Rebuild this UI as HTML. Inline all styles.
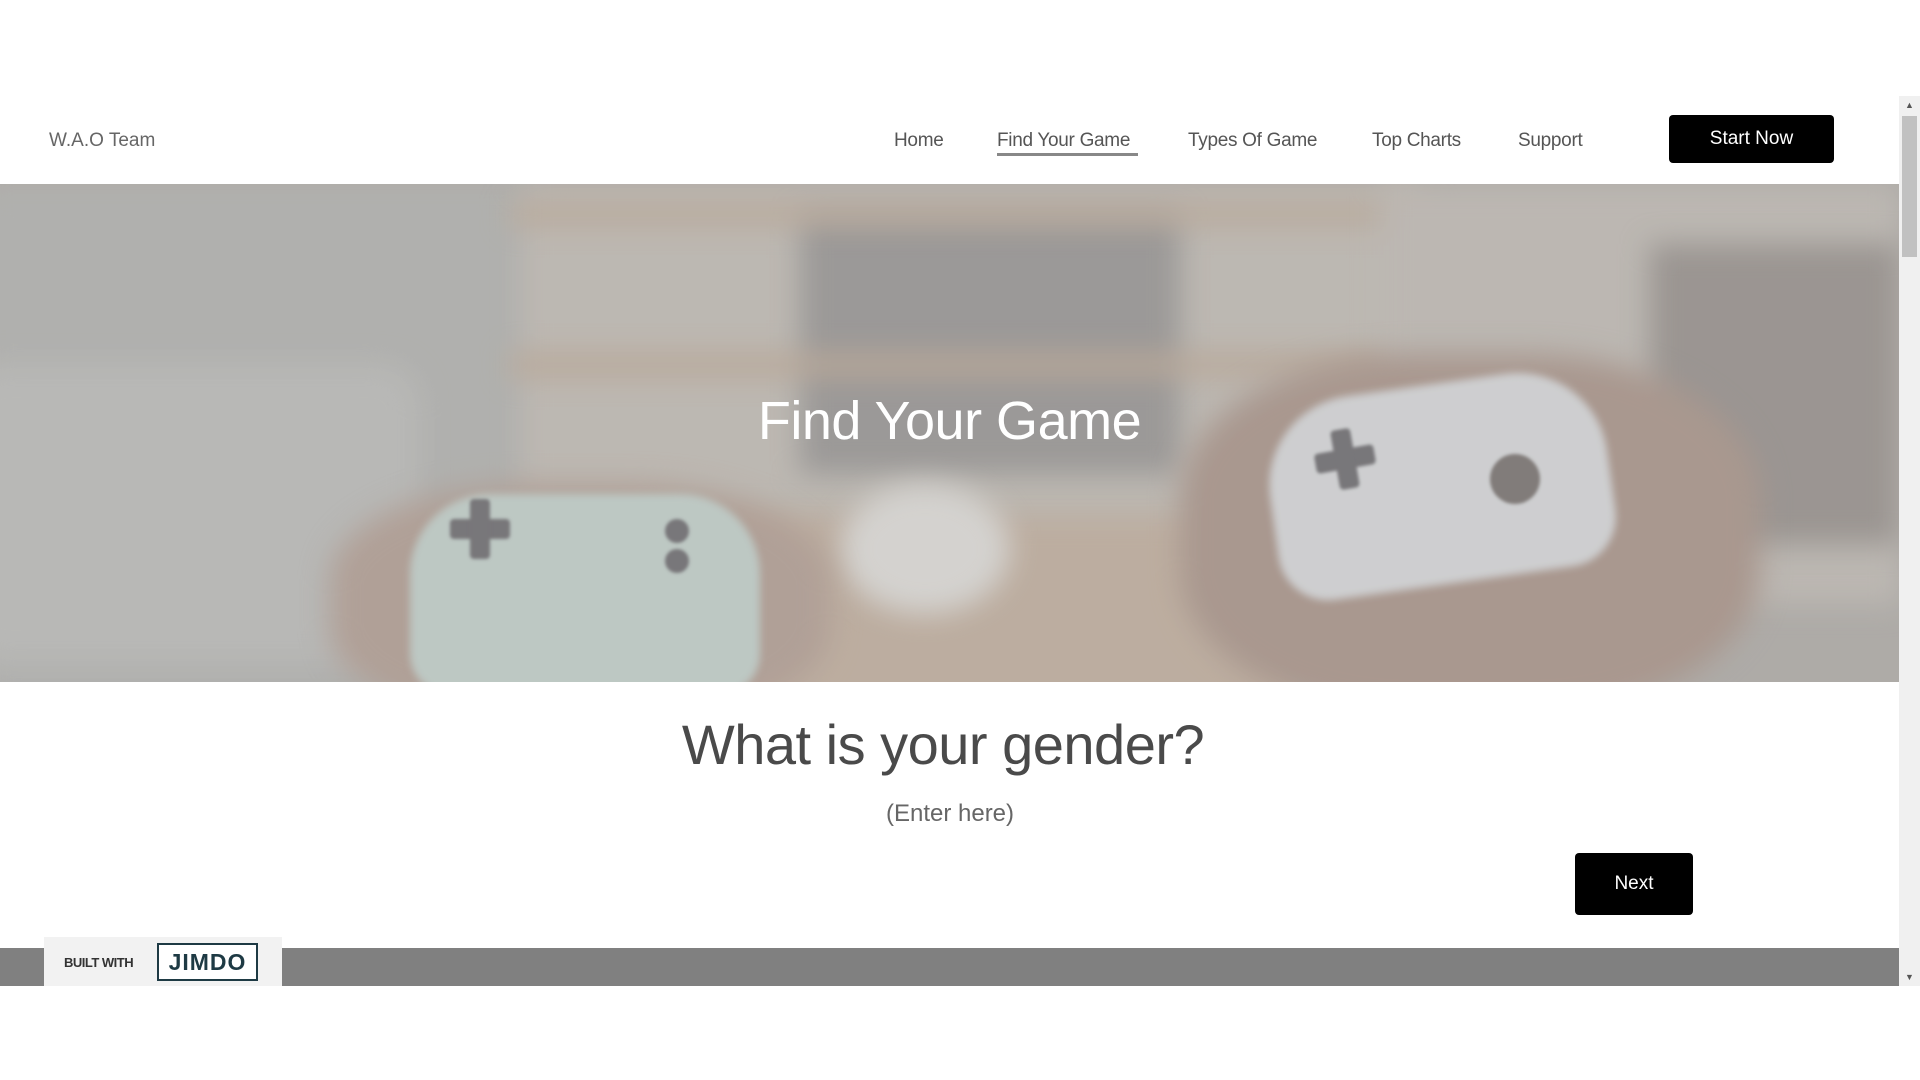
<!DOCTYPE html>
<html><head><meta charset="utf-8"><style>
*{margin:0;padding:0;box-sizing:border-box}
body{width:1920px;height:1080px;background:#fff;position:relative;overflow:hidden;font-family:"Liberation Sans",sans-serif}
.a{position:absolute}
.nav{color:#555;font-size:19px;top:130px;letter-spacing:-0.3px}
.hero{left:0;top:184px;width:1899px;height:498px;background:#a6a29d;overflow:hidden}
.b{position:absolute;filter:blur(14px)}
.k{position:absolute;background:#5e5c60;border-radius:50%;filter:blur(1.5px)}
</style></head><body>
<div class="a" style="left:49px;top:130px;font-size:19px;color:#666">W.A.O Team</div>
<div class="a nav" style="left:894px">Home</div>
<div class="a nav" style="left:997px">Find Your Game</div>
<div class="a" style="left:997px;top:153px;width:141px;height:3px;background:#888"></div>
<div class="a nav" style="left:1188px">Types Of Game</div>
<div class="a nav" style="left:1372px">Top Charts</div>
<div class="a nav" style="left:1518px">Support</div>
<div class="a" style="left:1669px;top:115px;width:165px;height:48px;background:#000;border-radius:4px;color:#fff;font-size:19px;text-align:center;line-height:48px">Start Now</div>

<div class="a hero">
 <div class="b" style="left:-20px;top:0;width:560px;height:520px;background:#a9a9a6"></div>
 <div class="b" style="left:-40px;top:180px;width:460px;height:300px;background:#b3b3b0;border-radius:40px"></div>
 <div class="b" style="left:520px;top:0;width:900px;height:380px;background:#b9b3ab"></div>
 <div class="b" style="left:800px;top:30px;width:380px;height:260px;background:#8d8a88"></div>
 <div class="b" style="left:510px;top:20px;width:920px;height:20px;background:#b49e8a"></div>
 <div class="b" style="left:510px;top:170px;width:920px;height:22px;background:#b49e8a"></div>
 <div class="b" style="left:1380px;top:0;width:520px;height:420px;background:#b8b2ab"></div>
 <div class="b" style="left:1650px;top:60px;width:250px;height:300px;background:#8c8580"></div>
 <div class="b" style="left:600px;top:330px;width:700px;height:200px;background:#b9a593"></div>
 <div class="b" style="left:840px;top:300px;width:170px;height:130px;background:#d8d6d2;border-radius:50%"></div>
 <div class="b" style="left:330px;top:300px;width:500px;height:240px;background:#a99387;border-radius:40%"></div>
 <div class="b" style="left:1180px;top:170px;width:580px;height:360px;background:#9f887c;border-radius:40%"></div>
 <div class="a" style="left:410px;top:310px;width:350px;height:200px;background:#bac8c2;border-radius:80px 80px 40px 40px;filter:blur(4px)"></div>
 <div class="a" style="left:1270px;top:200px;width:340px;height:200px;background:#d0d1d3;border-radius:90px 90px 50px 50px;transform:rotate(-8deg);filter:blur(4px)"></div>
 <div class="k" style="left:1490px;top:270px;width:50px;height:50px;background:#6a6360"></div>
 <div class="k" style="left:450px;top:335px;width:60px;height:20px;border-radius:4px"></div>
 <div class="k" style="left:470px;top:315px;width:20px;height:60px;border-radius:4px"></div>
 <div class="k" style="left:665px;top:335px;width:24px;height:24px"></div>
 <div class="k" style="left:665px;top:365px;width:24px;height:24px"></div>
 <div class="k" style="left:1315px;top:265px;width:60px;height:20px;border-radius:4px;transform:rotate(-10deg)"></div>
 <div class="k" style="left:1335px;top:245px;width:20px;height:60px;border-radius:4px;transform:rotate(-10deg)"></div>
 <div class="a" style="left:0;top:0;width:100%;height:100%;background:rgba(200,200,200,0.25)"></div>
 <div class="a" style="left:0;top:206px;width:100%;text-align:center;font-size:54px;color:#fff;letter-spacing:-0.5px">Find Your Game</div>
</div>

<div class="a" style="left:0;top:712px;width:1886px;text-align:center;font-size:56px;color:#4a4a4a;letter-spacing:-0.5px">What is your gender?</div>
<div class="a" style="left:0;top:800px;width:1900px;text-align:center;font-size:24px;color:#666">(Enter here)</div>
<div class="a" style="left:1575px;top:853px;width:118px;height:62px;background:#000;border-radius:4px;color:#fff;font-size:19px;text-align:center;line-height:62px">Next</div>

<div class="a" style="left:0;top:948px;width:1899px;height:38px;background:#808080"></div>
<div class="a" style="left:44px;top:937px;width:238px;height:49px;background:#f2f2f2"></div>
<div class="a" style="left:64px;top:955px;font-size:13px;font-weight:bold;color:#333;letter-spacing:-0.5px">BUILT WITH</div>
<div class="a" style="left:157px;top:943px;width:101px;height:38px;border:2px solid #1e3a44;background:#fff;color:#1e3a44;font-weight:bold;font-size:23px;text-align:center;line-height:34px;letter-spacing:1px">JIMDO</div>

<div class="a" style="left:1899px;top:96px;width:21px;height:890px;background:#f0f0f0"></div>
<div class="a" style="left:1902px;top:116px;width:15px;height:141px;background:#c1c1c1"></div>
<div class="a" style="left:1905px;top:100px;font-size:9px;color:#555">▲</div>
<div class="a" style="left:1905px;top:972px;font-size:9px;color:#555">▼</div>
</body></html>
